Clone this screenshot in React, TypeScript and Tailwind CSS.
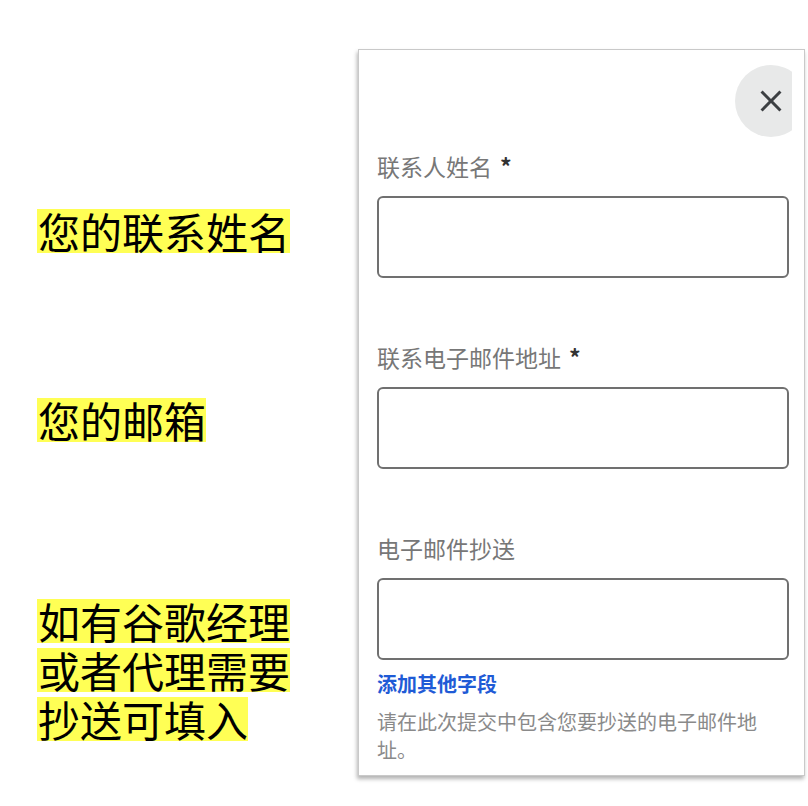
import React from "react";
import { MdClose } from "react-icons/md";

const cjk = { fontFamily: '"Noto Sans CJK SC", "Noto Sans", sans-serif' };

const Note = ({ lines }: { lines: string[] }) => (
  <div className="flex flex-col items-start gap-[5px]">
    {lines.map((line) => (
      <div key={line} className="h-[44px] bg-[#ffff55] pl-[1px] text-[42px] leading-[44px] text-black">
        {line}
      </div>
    ))}
  </div>
);

const Field = ({ label, required }: { label: string; required?: boolean }) => (
  <div className="flex flex-col">
    <div className="h-[30px] text-[23px] leading-[30px] text-[#777777]">
      {label}
      {required && <span className="ml-[8px] font-bold text-[#333333]">*</span>}
    </div>
    <div className="mt-[15px] h-[82px] w-full rounded-[6px] border-2 border-[#707070] bg-white" />
  </div>
);

const App = () => {
  return (
    <div className="flex h-[806px] w-[808px] bg-white" style={cjk}>
      {/* annotations */}
      <div className="flex w-[358px] flex-col pl-[37px] pt-[209px]">
        <Note lines={["您的联系姓名"]} />
        <div className="mt-[145px]">
          <Note lines={["您的邮箱"]} />
        </div>
        <div className="mt-[157px]">
          <Note lines={["如有谷歌经理", "或者代理需要", "抄送可填入"]} />
        </div>
      </div>

      {/* form panel */}
      <div className="mt-[49px] flex h-[727px] w-[447px] border border-[#c9c9c9] bg-white shadow-[-1px_3px_4px_rgba(0,0,0,0.3)]">
        <div className="flex w-[433px] flex-col overflow-hidden pl-[18px] pr-[3px]">
          <div className="mt-[15px] flex justify-end">
            <button className="mr-[-18px] flex h-[72px] w-[72px] items-center justify-center rounded-full bg-[#e8e9e9] text-[#3c3f42]">
              <MdClose size={36} />
            </button>
          </div>
          <div className="mt-[14px] flex flex-col gap-[64px]">
            <Field label="联系人姓名" required />
            <Field label="联系电子邮件地址" required />
            <Field label="电子邮件抄送" />
          </div>
          <div className="mt-[10px] h-[28px] text-[20px] font-bold leading-[28px] text-[#1f5bd6]">添加其他字段</div>
          <div className="mt-[10px] text-[20px] leading-[28px] text-[#8a8a8a]">
            请在此次提交中包含您要抄送的电子邮件地址。
          </div>
        </div>
      </div>
    </div>
  );
};

export default App;
